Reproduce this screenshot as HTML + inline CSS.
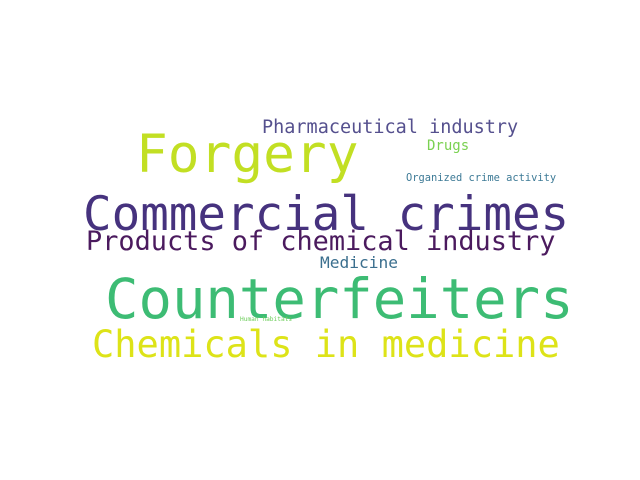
<!DOCTYPE html>
<html><head><meta charset="utf-8"><style>
html,body{margin:0;padding:0;background:#fff;width:640px;height:480px;overflow:hidden}
div{position:absolute;font-family:"DejaVu Sans Mono","Liberation Mono",monospace;line-height:1;white-space:nowrap}
</style></head><body>
<div style="left:262px;top:119px;font-size:18.5px;color:#55508e">Pharmaceutical industry</div>
<div style="left:136px;top:129px;font-size:52.8px;color:#c2df23">Forgery</div>
<div style="left:427px;top:139px;font-size:14px;color:#7ad151">Drugs</div>
<div style="left:406px;top:173px;font-size:10.4px;color:#3d7a96">Organized crime activity</div>
<div style="left:83px;top:191px;font-size:47.5px;color:#46327e">Commercial crimes</div>
<div style="left:86px;top:229px;font-size:26.9px;color:#4b1a5e">Products of chemical industry</div>
<div style="left:320px;top:255px;font-size:16.2px;color:#3b6f8e">Medicine</div>
<div style="left:105px;top:272px;font-size:55.6px;color:#3dbc74">Counterfeiters</div>
<div style="left:240px;top:317px;font-size:6.2px;color:#6ccd5a">Human habitats</div>
<div style="left:92px;top:326px;font-size:37px;color:#dde318">Chemicals in medicine</div>
</body></html>
